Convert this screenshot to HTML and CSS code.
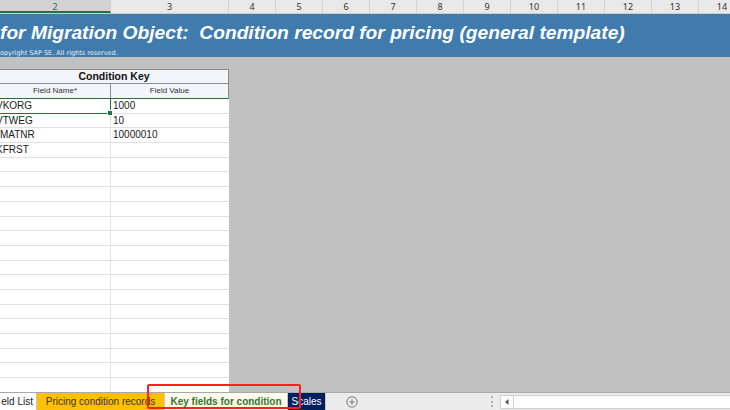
FILE: index.html
```html
<!DOCTYPE html>
<html lang="en">
<head>
  <meta charset="UTF-8" />
  <title>Key fields for condition</title>
  <link rel="stylesheet" href="styles.css">
</head>
<body>
  <div class="colhead">
    <div class="ch sel" style="width:111px">2</div>
    <div class="ch" style="width:118px">3</div>
    <div class="ch">4</div><div class="ch">5</div><div class="ch">6</div><div class="ch">7</div>
    <div class="ch">8</div><div class="ch">9</div><div class="ch">10</div><div class="ch">11</div>
    <div class="ch">12</div><div class="ch">13</div><div class="ch">14</div>
  </div>

  <div class="banner">
    <div class="title">for Migration Object:&nbsp; Condition record for pricing (general template)</div>
    <div class="copy">opyright SAP SE. All rights reserved.</div>
  </div>

  <div class="spacer"></div>

  <div class="main">
    <div class="sheet">
      <div class="keyhead">Condition Key</div>
      <div class="row sub">
        <div class="c1">Field Name*</div>
        <div class="c2">Field Value</div>
      </div>
      <div class="row active"><div class="c1 cut">VKORG</div><div class="c2">1000</div></div>
      <div class="row"><div class="c1 cut">VTWEG</div><div class="c2">10</div></div>
      <div class="row"><div class="c1">MATNR</div><div class="c2">10000010</div></div>
      <div class="row"><div class="c1 cut">KFRST</div><div class="c2"></div></div>
      <div class="row"><div class="c1"></div><div class="c2"></div></div>
      <div class="row"><div class="c1"></div><div class="c2"></div></div>
      <div class="row"><div class="c1"></div><div class="c2"></div></div>
      <div class="row"><div class="c1"></div><div class="c2"></div></div>
      <div class="row"><div class="c1"></div><div class="c2"></div></div>
      <div class="row"><div class="c1"></div><div class="c2"></div></div>
      <div class="row"><div class="c1"></div><div class="c2"></div></div>
      <div class="row"><div class="c1"></div><div class="c2"></div></div>
      <div class="row"><div class="c1"></div><div class="c2"></div></div>
      <div class="row"><div class="c1"></div><div class="c2"></div></div>
      <div class="row"><div class="c1"></div><div class="c2"></div></div>
      <div class="row"><div class="c1"></div><div class="c2"></div></div>
      <div class="row"><div class="c1"></div><div class="c2"></div></div>
      <div class="row"><div class="c1"></div><div class="c2"></div></div>
      <div class="row"><div class="c1"></div><div class="c2"></div></div>
      <div class="row"><div class="c1"></div><div class="c2"></div></div>
    </div>
    <div class="void"></div>
  </div>

  <div class="tabbar">
    <div class="tab plain">eld List</div>
    <div class="tab yellow">Pricing condition records</div>
    <div class="tab current">Key fields for condition</div>
    <div class="tab navy">Scales</div>
    <div class="addtab">
      <svg width="12" height="12" viewBox="0 0 12 12">
        <circle cx="6" cy="6" r="5.2" fill="none" stroke="#777" stroke-width="1"/>
        <path d="M6 3.3v5.4M3.3 6h5.4" stroke="#777" stroke-width="1"/>
      </svg>
    </div>
    <div class="grip"></div>
    <div class="hscroll">
      <div class="arrow">
        <svg width="6" height="8" viewBox="0 0 6 8"><path d="M4.5 1v6L1 4z" fill="#555"/></svg>
      </div>
      <div class="track"></div>
    </div>
  </div>

  <div class="mark"></div>
</body>
</html>
```

FILE: styles.css
```css
body {
  margin: 0;
  width: 730px;
  height: 410px;
  overflow: hidden;
  position: relative;
  font-family: "Liberation Sans", Arial, sans-serif;
  background: #c1c1c1;
}
.colhead {
  display: flex;
  height: 14px;
  background: #e9e9e9;
  border-bottom: 1px solid #cdcdcd;
  box-sizing: border-box;
}
.ch {
  width: 47px;
  flex-shrink: 0;
  border-right: 1px solid #d2d2d2;
  box-sizing: border-box;
  text-align: center;
  font-family: "Noto Sans", sans-serif;
  font-size: 9px;
  line-height: 13px;
  color: #333;
}
.ch.sel {
  background: #d3d3d3;
  color: #217346;
  border-bottom: 2px solid #217346;
}
.banner {
  height: 43px;
  background: #3f7cad;
  color: #fff;
  overflow: hidden;
  white-space: nowrap;
}
.title {
  font-weight: bold;
  font-style: italic;
  font-size: 19.2px;
  line-height: 22px;
  padding-top: 8px;
}
.copy {
  font-family: "DejaVu Sans", sans-serif;
  font-size: 6.5px;
  line-height: 9px;
  padding-top: 5px;
  color: #e6eef6;
}
.spacer {
  height: 12px;
}
.main {
  display: flex;
  height: 324px;
  border-bottom: 1px solid #a8a8a8;
  box-sizing: border-box;
}
.sheet {
  width: 229px;
  background: #fff;
  overflow: hidden;
}
.void {
  flex: 1;
  background: #c1c1c1;
}
.keyhead {
  height: 15px;
  background: #f2f5f9;
  border: 1px solid #8c8c8c;
  border-left: none;
  box-sizing: border-box;
  text-align: center;
  font-weight: bold;
  font-size: 10.5px;
  line-height: 13px;
  color: #111;
}
.row {
  display: flex;
  height: 14.7px;
  box-sizing: border-box;
  border-bottom: 1px solid #e1e1e1;
}
.c1, .c2 {
  box-sizing: border-box;
  font-size: 10px;
  line-height: 14px;
  color: #1a1a1a;
  white-space: nowrap;
  overflow: hidden;
}
.c1 {
  width: 111px;
  border-right: 1px solid #e1e1e1;
}
.c2 {
  width: 118px;
  padding-left: 2px;
}
.cut {
  text-indent: -4px;
}
.row.sub {
  height: 15px;
  background: #f2f5f9;
  border-bottom: 1px solid #217346;
  border-right: 1px solid #8c8c8c;
}
.row.sub .c1, .row.sub .c2 {
  text-align: center;
  font-size: 8px;
  line-height: 14px;
  color: #333;
  padding-left: 0;
}
.row.sub .c1 {
  border-right: 1px solid #8c8c8c;
}
.row.sub .c2 {
  width: 117px;
}
.row.active .c1 {
  position: relative;
  overflow: visible;
  border-right: 1px solid #217346;
  border-bottom: 1px solid #217346;
  height: 15px;
}
.row.active .c1::after {
  content: "";
  position: absolute;
  right: -3px;
  bottom: -3px;
  width: 4px;
  height: 4px;
  background: #217346;
  border: 1px solid #fff;
}
.tabbar {
  display: flex;
  align-items: stretch;
  height: 17px;
  background: #ececec;
}
.tab {
  font-family: "Liberation Sans", sans-serif;
  font-size: 10px;
  line-height: 17px;
  white-space: nowrap;
  overflow: hidden;
  text-align: center;
  border-right: 1px solid #c8c8c8;
  box-sizing: border-box;
}
.tab.plain {
  width: 37px;
  background: #fff;
  color: #222;
  text-align: right;
  padding-right: 3px;
}
.tab.yellow {
  width: 128px;
  background: #ffc000;
  color: #333;
}
.tab.current {
  width: 123px;
  background: linear-gradient(#fdfbf0, #fbf6dc);
  color: #2a7a30;
  font-weight: bold;
}
.tab.navy {
  width: 38px;
  background: #002060;
  color: #fff;
}
.addtab {
  width: 52px;
  display: flex;
  align-items: center;
  justify-content: center;
}
.grip {
  width: 1px;
  margin: 3px 0 3px 113px;
  border-left: 2px dotted #b0b0b0;
}
.hscroll {
  flex: 1;
  display: flex;
  margin: 2px 0 1px 6px;
  border: 1px solid #d0d0d0;
  border-right: none;
  background: #fff;
}
.arrow {
  width: 12px;
  display: flex;
  align-items: center;
  justify-content: center;
  border-right: 1px solid #d0d0d0;
}
.track {
  flex: 1;
}
.mark {
  position: absolute;
  left: 147px;
  top: 384px;
  width: 154px;
  height: 25px;
  box-sizing: border-box;
  border: 2px solid #ff1f1f;
  border-radius: 2px;
}
```
